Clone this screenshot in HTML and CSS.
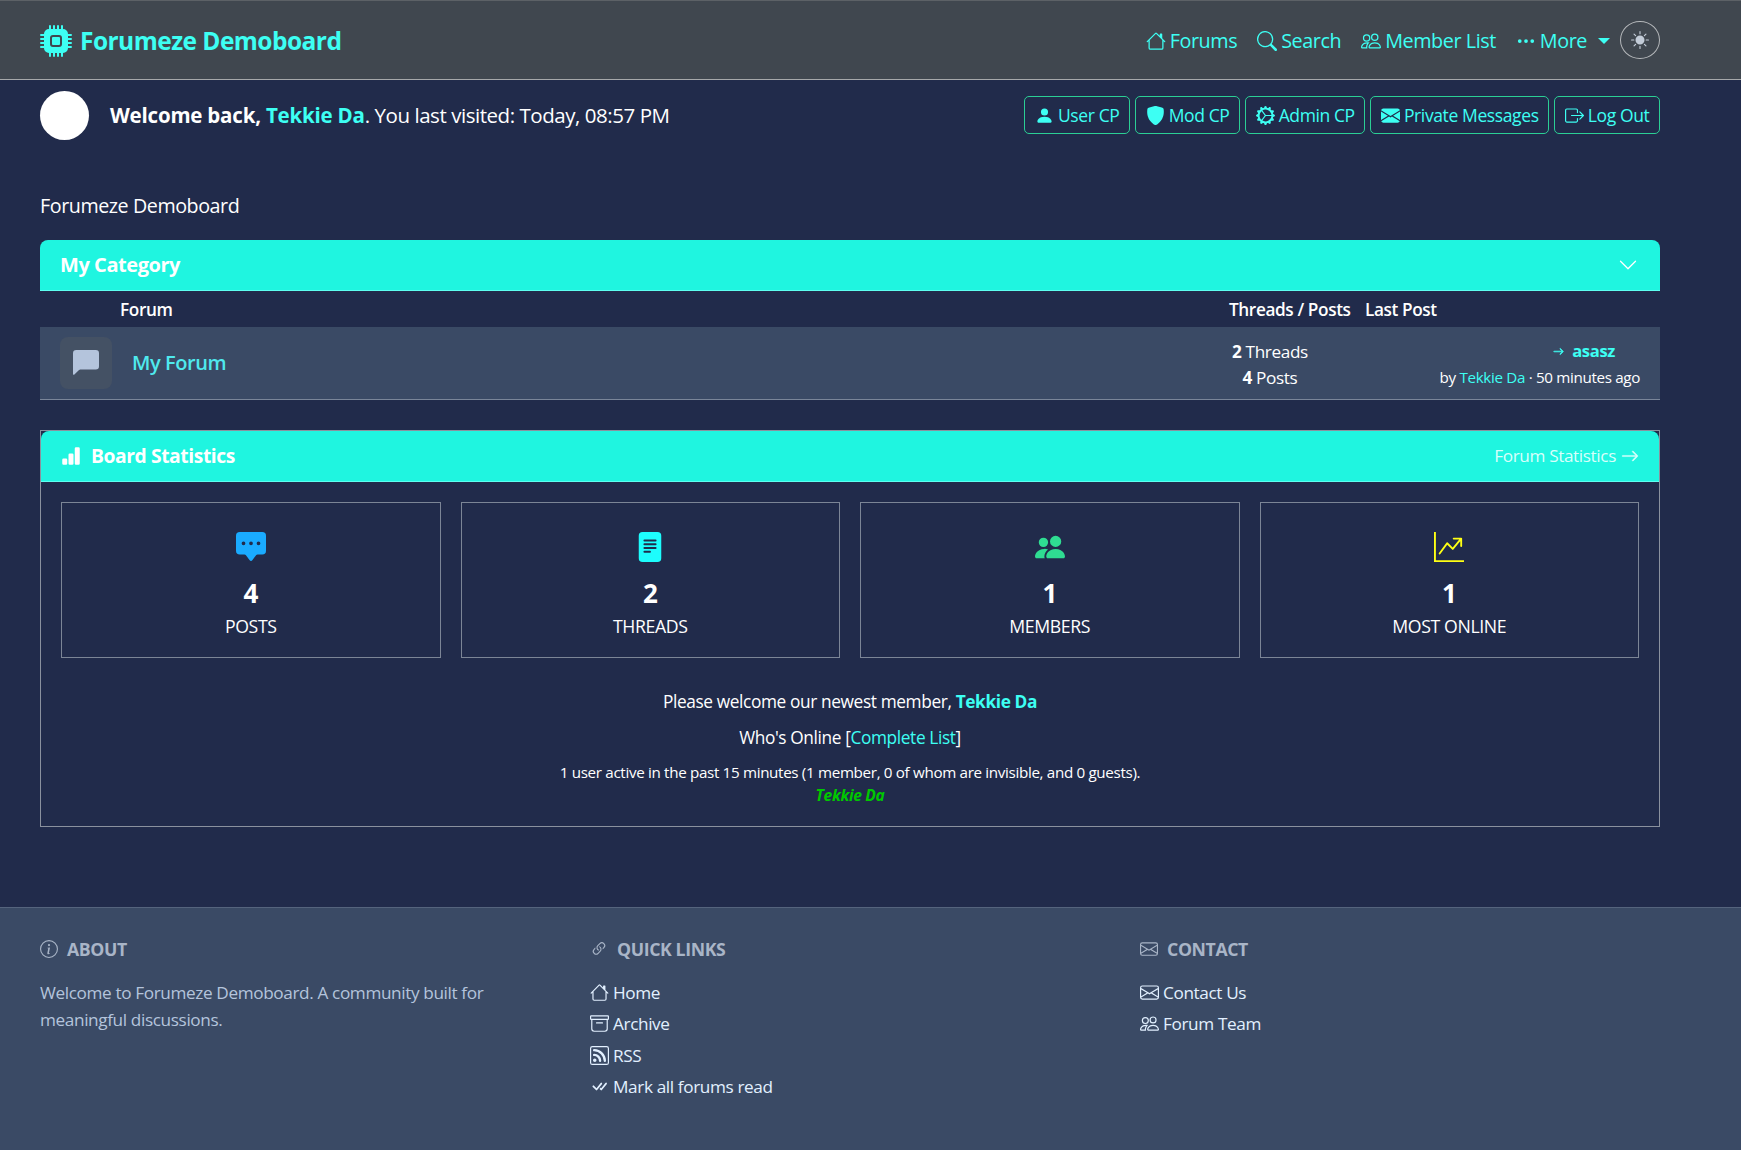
FILE: index.html
```html
<!DOCTYPE html>
<html lang="en">
<head>
<meta charset="utf-8">
<title>Forumeze Demoboard</title>
<link rel="stylesheet" href="styles.css">
</head>
<body>
<svg class="defs" aria-hidden="true">
<symbol id="i-house" viewBox="0 0 16 16"><path d="M8.707 1.5a1 1 0 0 0-1.414 0L.646 8.146a.5.5 0 0 0 .708.708L2 8.207V13.5A1.5 1.5 0 0 0 3.5 15h9a1.5 1.5 0 0 0 1.5-1.5V8.207l.646.647a.5.5 0 0 0 .708-.708L13 5.793V2.5a.5.5 0 0 0-.5-.5h-1a.5.5 0 0 0-.5.5v1.293zM13 7.207V13.5a.5.5 0 0 1-.5.5h-9a.5.5 0 0 1-.5-.5V7.207l5-5z"/></symbol>
<symbol id="i-people" viewBox="0 0 16 16"><path d="M15 14s1 0 1-1-1-4-5-4-5 3-5 4 1 1 1 1zm-7.978-1L7 12.996c.001-.264.167-1.03.76-1.72C8.312 10.629 9.282 10 11 10c1.717 0 2.687.63 3.24 1.276.593.69.758 1.457.76 1.72l-.008.002-.014.002zM11 7a2 2 0 1 0 0-4 2 2 0 0 0 0 4m3-2a3 3 0 1 1-6 0 3 3 0 0 1 6 0M6.936 9.28a6 6 0 0 0-1.23-.247A7 7 0 0 0 5 9c-4 0-5 3-5 4q0 1 1 1h4.216A2.24 2.24 0 0 1 5 13c0-1.01.377-2.042 1.09-2.904.243-.294.526-.569.846-.816M4.92 10A5.5 5.5 0 0 0 4 13H1c0-.26.164-1.03.76-1.724.545-.636 1.492-1.256 3.16-1.275ZM1.5 5.5a3 3 0 1 1 6 0 3 3 0 0 1-6 0m3-2a2 2 0 1 0 0 4 2 2 0 0 0 0-4"/></symbol>
<symbol id="i-envelope" viewBox="0 0 16 16"><path d="M0 4a2 2 0 0 1 2-2h12a2 2 0 0 1 2 2v8a2 2 0 0 1-2 2H2a2 2 0 0 1-2-2zm2-1a1 1 0 0 0-1 1v.217l7 4.2 7-4.2V4a1 1 0 0 0-1-1zm13 2.383-4.708 2.825L15 11.105zm-.034 6.876-5.64-3.471L8 9.583l-1.326-.795-5.64 3.47A1 1 0 0 0 2 13h12a1 1 0 0 0 .966-.741M1 11.105l4.708-2.897L1 5.383z"/></symbol>
<symbol id="i-arrow" viewBox="0 0 16 16"><path d="M1 8a.5.5 0 0 1 .5-.5h11.793l-3.147-3.146a.5.5 0 0 1 .708-.708l4 4a.5.5 0 0 1 0 .708l-4 4a.5.5 0 0 1-.708-.708L13.293 8.5H1.5A.5.5 0 0 1 1 8"/></symbol>
</svg>

<header class="topbar">
  <a class="brand" href="#">
    <svg class="brand-icon" viewBox="0 0 16 16"><path d="M6.5 6a.5.5 0 0 0-.5.5v3a.5.5 0 0 0 .5.5h3a.5.5 0 0 0 .5-.5v-3a.5.5 0 0 0-.5-.5z"/><path d="M5.5.5a.5.5 0 0 0-1 0V2A2.5 2.5 0 0 0 2 4.5H.5a.5.5 0 0 0 0 1H2v1H.5a.5.5 0 0 0 0 1H2v1H.5a.5.5 0 0 0 0 1H2v1H.5a.5.5 0 0 0 0 1H2A2.5 2.5 0 0 0 4.5 14v1.5a.5.5 0 0 0 1 0V14h1v1.5a.5.5 0 0 0 1 0V14h1v1.5a.5.5 0 0 0 1 0V14h1v1.5a.5.5 0 0 0 1 0V14a2.5 2.5 0 0 0 2.5-2.5h1.5a.5.5 0 0 0 0-1H14v-1h1.5a.5.5 0 0 0 0-1H14v-1h1.5a.5.5 0 0 0 0-1H14v-1h1.5a.5.5 0 0 0 0-1H14A2.5 2.5 0 0 0 11.5 2V.5a.5.5 0 0 0-1 0V2h-1V.5a.5.5 0 0 0-1 0V2h-1V.5a.5.5 0 0 0-1 0V2h-1zm1 4.5h3A1.5 1.5 0 0 1 11 6.5v3A1.5 1.5 0 0 1 9.5 11h-3A1.5 1.5 0 0 1 5 9.5v-3A1.5 1.5 0 0 1 6.5 5"/></svg>
    <span>Forumeze Demoboard</span>
  </a>
  <nav class="mainnav">
    <a href="#"><svg class="ic ic-nav" viewBox="0 0 16 16"><use href="#i-house"/></svg>Forums</a>
    <a href="#"><svg class="ic ic-nav" viewBox="0 0 16 16"><path d="M11.742 10.344a6.5 6.5 0 1 0-1.397 1.398h-.001q.044.06.098.115l3.85 3.85a1 1 0 0 0 1.415-1.414l-3.85-3.85a1 1 0 0 0-.115-.1zM12 6.5a5.5 5.5 0 1 1-11 0 5.5 5.5 0 0 1 11 0"/></svg>Search</a>
    <a href="#"><svg class="ic ic-nav" viewBox="0 0 16 16"><use href="#i-people"/></svg>Member List</a>
    <a href="#"><svg class="ic ic-nav" viewBox="0 0 16 16"><path d="M3 9.5a1.5 1.5 0 1 1 0-3 1.5 1.5 0 0 1 0 3m5 0a1.5 1.5 0 1 1 0-3 1.5 1.5 0 0 1 0 3m5 0a1.5 1.5 0 1 1 0-3 1.5 1.5 0 0 1 0 3"/></svg>More<span class="caret"></span></a>
    <button class="theme" type="button" aria-label="Theme"><svg class="ic-sun" viewBox="0 0 16 16"><path d="M8 12a4 4 0 1 0 0-8 4 4 0 0 0 0 8M8 0a.5.5 0 0 1 .5.5v2a.5.5 0 0 1-1 0v-2A.5.5 0 0 1 8 0m0 13a.5.5 0 0 1 .5.5v2a.5.5 0 0 1-1 0v-2A.5.5 0 0 1 8 13m8-5a.5.5 0 0 1-.5.5h-2a.5.5 0 0 1 0-1h2a.5.5 0 0 1 .5.5M3 8a.5.5 0 0 1-.5.5h-2a.5.5 0 0 1 0-1h2A.5.5 0 0 1 3 8m10.657-5.657a.5.5 0 0 1 0 .707l-1.414 1.415a.5.5 0 1 1-.707-.708l1.414-1.414a.5.5 0 0 1 .707 0m-9.193 9.193a.5.5 0 0 1 0 .707L3.05 13.657a.5.5 0 0 1-.707-.707l1.414-1.414a.5.5 0 0 1 .707 0m9.193 2.121a.5.5 0 0 1-.707 0l-1.414-1.414a.5.5 0 0 1 .707-.707l1.414 1.414a.5.5 0 0 1 0 .707M4.464 4.465a.5.5 0 0 1-.707 0L2.343 3.05a.5.5 0 1 1 .707-.707l1.414 1.414a.5.5 0 0 1 0 .708"/></svg></button>
  </nav>
</header>

<main class="page">
  <section class="welcome">
    <div class="avatar"></div>
    <p class="welcome-text"><strong>Welcome back, <a href="#">Tekkie Da</a></strong>. You last visited: Today, 08:57 PM</p>
    <div class="actions">
      <a class="btn" href="#"><svg class="ic" viewBox="0 0 16 16"><path d="M3 14s-1 0-1-1 1-4 6-4 6 3 6 4-1 1-1 1zm5-6a3 3 0 1 0 0-6 3 3 0 0 0 0 6"/></svg>User CP</a>
      <a class="btn" href="#"><svg class="ic" viewBox="0 0 16 16"><path d="M5.072.56C6.157.265 7.31 0 8 0s1.843.265 2.928.56c1.11.3 2.229.655 2.887.87a1.54 1.54 0 0 1 1.044 1.262c.596 4.477-.787 7.795-2.465 9.99a11.8 11.8 0 0 1-2.517 2.453 7 7 0 0 1-1.048.625c-.28.132-.581.24-.829.24s-.548-.108-.829-.24a7 7 0 0 1-1.048-.625 11.8 11.8 0 0 1-2.517-2.453C1.928 10.487.545 7.169 1.141 2.692A1.54 1.54 0 0 1 2.185 1.43 63 63 0 0 1 5.072.56"/></svg>Mod CP</a>
      <a class="btn" href="#"><svg class="ic" viewBox="0 0 16 16"><path d="M7.068.727c.243-.97 1.62-.97 1.864 0l.071.286a.96.96 0 0 0 1.622.434l.205-.211c.695-.719 1.888-.03 1.613.931l-.08.284a.96.96 0 0 0 1.187 1.187l.283-.081c.96-.275 1.65.918.931 1.613l-.211.205a.96.96 0 0 0 .434 1.622l.286.071c.97.243.97 1.62 0 1.864l-.286.071a.96.96 0 0 0-.434 1.622l.211.205c.719.695.03 1.888-.931 1.613l-.284-.08a.96.96 0 0 0-1.187 1.187l.081.283c.275.96-.918 1.65-1.613.931l-.205-.211a.96.96 0 0 0-1.622.434l-.071.286c-.243.97-1.62.97-1.864 0l-.071-.286a.96.96 0 0 0-1.622-.434l-.205.211c-.695.719-1.888.03-1.613-.931l.08-.284a.96.96 0 0 0-1.186-1.187l-.284.081c-.96.275-1.65-.918-.931-1.613l.211-.205a.96.96 0 0 0-.434-1.622l-.286-.071c-.97-.243-.97-1.62 0-1.864l.286-.071a.96.96 0 0 0 .434-1.622l-.211-.205c-.719-.695-.03-1.888.931-1.613l.284.08a.96.96 0 0 0 1.187-1.186l-.081-.284c-.275-.96.918-1.65 1.613-.931l.205.211a.96.96 0 0 0 1.622-.434zM12.973 8.5H8.25l-2.834 3.779A4.998 4.998 0 0 0 12.973 8.5m0-1a4.998 4.998 0 0 0-7.557-3.779l2.834 3.78zM5.048 3.967l-.087.065zm-.431.355A4.98 4.98 0 0 0 3.002 8c0 1.455.622 2.765 1.615 3.678L7.375 8 4.617 4.322Z"/></svg>Admin CP</a>
      <a class="btn" href="#"><svg class="ic" viewBox="0 0 16 16"><path d="M.05 3.555A2 2 0 0 1 2 2h12a2 2 0 0 1 1.95 1.555L8 8.414zM0 4.697v7.104l5.803-3.558zM6.761 8.83l-6.57 4.027A2 2 0 0 0 2 14h12a2 2 0 0 0 1.808-1.144l-6.57-4.027L8 9.586zm3.436-.586L16 11.801V4.697z"/></svg>Private Messages</a>
      <a class="btn" href="#"><svg class="ic" viewBox="0 0 16 16"><path fill-rule="evenodd" d="M10 12.5a.5.5 0 0 1-.5.5h-8a.5.5 0 0 1-.5-.5v-9a.5.5 0 0 1 .5-.5h8a.5.5 0 0 1 .5.5v2a.5.5 0 0 0 1 0v-2A1.5 1.5 0 0 0 9.5 2h-8A1.5 1.5 0 0 0 0 3.5v9A1.5 1.5 0 0 0 1.5 14h8a1.5 1.5 0 0 0 1.5-1.5v-2a.5.5 0 0 0-1 0z"/><path fill-rule="evenodd" d="M15.854 8.354a.5.5 0 0 0 0-.708l-3-3a.5.5 0 0 0-.708.708L14.293 7.5H5.5a.5.5 0 0 0 0 1h8.793l-2.147 2.146a.5.5 0 0 0 .708.708z"/></svg>Log Out</a>
    </div>
  </section>

  <div class="crumb">Forumeze Demoboard</div>

  <section class="category">
    <div class="cat-head">
      <span>My Category</span>
      <svg class="chev" viewBox="0 0 16 16"><path d="M1.646 4.646a.5.5 0 0 1 .708 0L8 10.293l5.646-5.647a.5.5 0 0 1 .708.708l-6 6a.5.5 0 0 1-.708 0l-6-6a.5.5 0 0 1 0-.708"/></svg>
    </div>
    <div class="cat-cols">
      <span class="col-forum">Forum</span>
      <span class="col-counts">Threads / Posts</span>
      <span class="col-last">Last Post</span>
    </div>
    <div class="forum-row">
      <div class="forum-icon"><svg viewBox="0 0 16 16"><path d="M2 0a2 2 0 0 0-2 2v12.793a.5.5 0 0 0 .854.353l2.853-2.853A1 1 0 0 1 4.414 12H14a2 2 0 0 0 2-2V2a2 2 0 0 0-2-2z"/></svg></div>
      <a class="forum-name" href="#">My Forum</a>
      <div class="forum-counts">
        <div><b>2</b> Threads</div>
        <div><b>4</b> Posts</div>
      </div>
      <div class="forum-last">
        <div class="last-title"><svg class="ic-small" viewBox="0 0 16 16"><use href="#i-arrow"/></svg><a href="#">asasz</a></div>
        <div class="last-by">by <a href="#">Tekkie Da</a> · 50 minutes ago</div>
      </div>
    </div>
  </section>

  <section class="stats">
    <div class="stats-head">
      <span class="stats-title"><svg viewBox="0 0 16 16"><path d="M1 11a1 1 0 0 1 1-1h2a1 1 0 0 1 1 1v3a1 1 0 0 1-1 1H2a1 1 0 0 1-1-1zm5-4a1 1 0 0 1 1-1h2a1 1 0 0 1 1 1v7a1 1 0 0 1-1 1H7a1 1 0 0 1-1-1zm5-5a1 1 0 0 1 1-1h2a1 1 0 0 1 1 1v12a1 1 0 0 1-1 1h-2a1 1 0 0 1-1-1z"/></svg>Board Statistics</span>
      <a class="stats-link" href="#">Forum Statistics<svg viewBox="0 0 16 16"><use href="#i-arrow"/></svg></a>
    </div>
    <div class="stat-grid">
      <div class="stat">
        <svg class="stat-icon c-blue" viewBox="0 0 16 16"><path d="M0 2a2 2 0 0 1 2-2h12a2 2 0 0 1 2 2v8a2 2 0 0 1-2 2h-2.5a1 1 0 0 0-.8.4l-1.9 2.533a1 1 0 0 1-1.6 0L5.3 12.4a1 1 0 0 0-.8-.4H2a2 2 0 0 1-2-2zm5 4a1 1 0 1 0-2 0 1 1 0 0 0 2 0m4 0a1 1 0 1 0-2 0 1 1 0 0 0 2 0m3 1a1 1 0 1 0 0-2 1 1 0 0 0 0 2"/></svg>
        <div class="stat-num">4</div><div class="stat-label">Posts</div>
      </div>
      <div class="stat">
        <svg class="stat-icon c-cyan" viewBox="0 0 16 16"><path d="M12 0H4a2 2 0 0 0-2 2v12a2 2 0 0 0 2 2h8a2 2 0 0 0 2-2V2a2 2 0 0 0-2-2M5 4h6a.5.5 0 0 1 0 1H5a.5.5 0 0 1 0-1m-.5 2.5A.5.5 0 0 1 5 6h6a.5.5 0 0 1 0 1H5a.5.5 0 0 1-.5-.5M5 8h6a.5.5 0 0 1 0 1H5a.5.5 0 0 1 0-1m0 2h3a.5.5 0 0 1 0 1H5a.5.5 0 0 1 0-1"/></svg>
        <div class="stat-num">2</div><div class="stat-label">Threads</div>
      </div>
      <div class="stat">
        <svg class="stat-icon c-green" viewBox="0 0 16 16"><path d="M7 14s-1 0-1-1 1-4 5-4 5 3 5 4-1 1-1 1zm4-6a3 3 0 1 0 0-6 3 3 0 0 0 0 6m-5.784 6A2.24 2.24 0 0 1 5 13c0-1.355.68-2.75 1.936-3.72A6.3 6.3 0 0 0 5 9c-4 0-5 3-5 4s1 1 1 1zM4.5 8a2.5 2.5 0 1 0 0-5 2.5 2.5 0 0 0 0 5"/></svg>
        <div class="stat-num">1</div><div class="stat-label">Members</div>
      </div>
      <div class="stat">
        <svg class="stat-icon c-yellow" viewBox="0 0 16 16"><path fill-rule="evenodd" d="M0 0h1v15h15v1H0zm10 3.5a.5.5 0 0 1 .5-.5h4a.5.5 0 0 1 .5.5v4a.5.5 0 0 1-1 0V4.9l-3.613 4.417a.5.5 0 0 1-.74.037L7.06 6.767l-3.656 5.027a.5.5 0 0 1-.808-.588l4-5.5a.5.5 0 0 1 .758-.06l2.609 2.61L13.445 4H10.5a.5.5 0 0 1-.5-.5"/></svg>
        <div class="stat-num">1</div><div class="stat-label">Most Online</div>
      </div>
    </div>
    <div class="online">
      <p class="online-line">Please welcome our newest member, <a class="strong" href="#">Tekkie Da</a></p>
      <p class="online-line">Who's Online [<a href="#">Complete List</a>]</p>
      <p class="online-small">1 user active in the past 15 minutes (1 member, 0 of whom are invisible, and 0 guests).</p>
      <p class="online-user"><a href="#">Tekkie Da</a></p>
    </div>
  </section>
</main>

<footer class="footer">
  <div class="foot-col">
    <h4 class="foot-head"><svg viewBox="0 0 16 16"><path d="M8 15A7 7 0 1 1 8 1a7 7 0 0 1 0 14m0 1A8 8 0 1 0 8 0a8 8 0 0 0 0 16"/><path d="m8.93 6.588-2.29.287-.082.38.45.083c.294.07.352.176.288.469l-.738 3.468c-.194.897.105 1.319.808 1.319.545 0 1.178-.252 1.465-.598l.088-.416c-.2.176-.492.246-.686.246-.275 0-.375-.193-.304-.533zM9 4.5a1 1 0 1 1-2 0 1 1 0 0 1 2 0"/></svg>About</h4>
    <p class="foot-text">Welcome to Forumeze Demoboard. A community built for meaningful discussions.</p>
  </div>
  <div class="foot-col">
    <h4 class="foot-head"><svg viewBox="0 0 16 16"><path d="M4.715 6.542 3.343 7.914a3 3 0 1 0 4.243 4.243l1.828-1.829A3 3 0 0 0 8.586 5.5L8 6.086a1 1 0 0 0-.154.199 2 2 0 0 1 .861 3.337L6.88 11.45a2 2 0 1 1-2.83-2.83l.793-.792a4 4 0 0 1-.128-1.287z"/><path d="M6.586 4.672A3 3 0 0 0 7.414 9.5l.775-.776a2 2 0 0 1-.896-3.346L9.12 3.55a2 2 0 1 1 2.83 2.83l-.793.792c.112.42.155.855.128 1.287l1.372-1.372a3 3 0 1 0-4.243-4.243z"/></svg>Quick Links</h4>
    <ul class="foot-links">
      <li><a href="#"><svg class="ic" viewBox="0 0 16 16"><use href="#i-house"/></svg>Home</a></li>
      <li><a href="#"><svg class="ic" viewBox="0 0 16 16"><path d="M0 2a1 1 0 0 1 1-1h14a1 1 0 0 1 1 1v2a1 1 0 0 1-1 1v7.5a2.5 2.5 0 0 1-2.5 2.5h-9A2.5 2.5 0 0 1 1 12.5V5a1 1 0 0 1-1-1zm2 3v7.5A1.5 1.5 0 0 0 3.5 14h9a1.5 1.5 0 0 0 1.5-1.5V5zm13-3H1v2h14zM5 7.5a.5.5 0 0 1 .5-.5h5a.5.5 0 0 1 0 1h-5a.5.5 0 0 1-.5-.5"/></svg>Archive</a></li>
      <li><a href="#"><svg class="ic" viewBox="0 0 16 16"><path d="M14 1a1 1 0 0 1 1 1v12a1 1 0 0 1-1 1H2a1 1 0 0 1-1-1V2a1 1 0 0 1 1-1zM2 0a2 2 0 0 0-2 2v12a2 2 0 0 0 2 2h12a2 2 0 0 0 2-2V2a2 2 0 0 0-2-2z"/><path d="M5.5 12a1.5 1.5 0 1 1-3 0 1.5 1.5 0 0 1 3 0m-3-8.5a1 1 0 0 1 1-1c5.523 0 10 4.477 10 10a1 1 0 1 1-2 0 8 8 0 0 0-8-8 1 1 0 0 1-1-1m0 4a1 1 0 0 1 1-1 6 6 0 0 1 6 6 1 1 0 1 1-2 0 4 4 0 0 0-4-4 1 1 0 0 1-1-1"/></svg>RSS</a></li>
      <li><a href="#"><svg class="ic" viewBox="0 0 16 16"><path d="M8.97 4.97a.75.75 0 0 1 1.07 1.05l-3.99 4.99a.75.75 0 0 1-1.08.02L2.324 8.384a.75.75 0 1 1 1.06-1.06l2.094 2.093L8.95 4.992zm-.92 5.14.92.92a.75.75 0 0 0 1.079-.02l3.992-4.99a.75.75 0 1 0-1.091-1.028L9.477 9.417l-.485-.486z"/></svg>Mark all forums read</a></li>
    </ul>
  </div>
  <div class="foot-col">
    <h4 class="foot-head"><svg viewBox="0 0 16 16"><use href="#i-envelope"/></svg>Contact</h4>
    <ul class="foot-links">
      <li><a href="#"><svg class="ic" viewBox="0 0 16 16"><use href="#i-envelope"/></svg>Contact Us</a></li>
      <li><a href="#"><svg class="ic" viewBox="0 0 16 16"><use href="#i-people"/></svg>Forum Team</a></li>
    </ul>
  </div>
</footer>
</body>
</html>
```

FILE: styles.css
```css
* { box-sizing: border-box; letter-spacing: -0.022em; }
html, body { margin: 0; padding: 0; }
body {
  background: #212b4b;
  color: #fff;
  font-family: "Open Sans", "Noto Sans", sans-serif;
  font-size: 17px;
  line-height: 1.5;
}
a { color: #3dfff3; text-decoration: none; }
p { margin: 0; }
svg { fill: currentColor; }
.defs { position: absolute; width: 0; height: 0; overflow: hidden; }
.ic { width: 19px; height: 19px; flex: none; }

.topbar {
  height: 80px;
  padding: 2px 81px 0 40px;
  display: flex;
  align-items: center;
  justify-content: space-between;
  background: #40474f;
  border-top: 1px solid #5c6166;
  border-bottom: 1px solid #a6a8aa;
}
.brand { display: flex; align-items: center; gap: 8px; font-size: 24.5px; font-weight: 700; }
.brand-icon { width: 32px; height: 32px; }
.mainnav { display: flex; align-items: center; gap: 20px; font-size: 19.8px; }
.mainnav a { display: flex; align-items: center; gap: 4px; }
.ic-nav { width: 20px; height: 20px; }
.caret { width: 0; height: 0; margin-left: 7px; border-left: 6px solid transparent; border-right: 6px solid transparent; border-top: 6px solid currentColor; }
.theme { width: 40px; height: 38px; margin-left: -10px; margin-top: -2px; padding: 0; display: flex; align-items: center; justify-content: center; background: transparent; border: 1px solid #b5b8bb; border-radius: 50%; color: #c3ccd8; }
.ic-sun { width: 18px; height: 18px; }

.page { padding: 8px 81px 0 40px; height: 827px; }
.welcome { display: flex; align-items: center; height: 54px; }
.avatar { width: 49px; height: 49px; border-radius: 50%; background: #fff; margin-right: 21px; }
.welcome-text { font-size: 20.5px; flex: 1; }
.welcome-text strong { letter-spacing: -0.01em; }
.welcome-text a { color: #3dfff3; letter-spacing: -0.01em; }
.actions { display: flex; gap: 5px; }
.btn { height: 38px; display: flex; align-items: center; gap: 4px; padding: 0 9.6px; border: 1px solid #2bcf95; border-radius: 5px; font-size: 17.5px; }

.crumb { font-size: 19.7px; margin-top: 50px; height: 28px; line-height: 28px; }

.category { margin-top: 20px; }
.cat-head {
  height: 51px;
  padding: 0 20px;
  display: flex;
  align-items: center;
  justify-content: space-between;
  background: #1ff5e0;
  border-bottom: 1px solid #5dfff0;
  border-radius: 8px 8px 0 0;
  font-size: 20px;
  font-weight: 700;
}
.chev { width: 20px; height: 20px; margin-right: 2px; }
.cat-cols { height: 36px; padding-top: 2px; display: flex; align-items: center; font-size: 17.2px; font-weight: 600; }
.col-forum { margin-left: 80px; width: 1109px; }
.col-counts { width: 136px; }
.forum-row { height: 73px; display: flex; align-items: center; padding: 0 20px; background: #3a4a65; border-bottom: 1px solid #7a8699; }
.forum-icon { width: 52px; height: 52px; display: flex; align-items: center; justify-content: center; background: #445164; border-radius: 8px; color: #b4c4dc; }
.forum-icon svg { width: 26px; height: 26px; }
.forum-name { margin-left: 20px; width: 1088px; font-size: 20px; font-weight: 600; color: #4fe9ee; }
.forum-counts { width: 100px; margin-top: 3px; text-align: center; font-size: 17.2px; line-height: 26px; }
.forum-last { flex: 1; margin-top: 3px; text-align: right; font-size: 15.2px; }
.last-title { padding-right: 25px; display: flex; justify-content: flex-end; align-items: center; gap: 8px; font-weight: 700; font-size: 16.6px; color: #3dfff3; line-height: 26px; }
.ic-small { width: 11px; height: 11px; stroke: currentColor; stroke-width: 1; }
.last-by { line-height: 27px; }

.stats { margin-top: 30px; height: 397px; border: 1px solid #8a919e; }
.stats-head { height: 51px; padding: 0 20px; display: flex; align-items: center; justify-content: space-between; background: #1ff5e0; border-bottom: 1px solid #5dfff0; border-radius: 8px 8px 0 0; }
.stats-title { display: flex; align-items: center; gap: 10px; font-size: 19.3px; font-weight: 700; }
.stats-title svg { width: 20px; height: 20px; }
.stats-link { display: flex; align-items: center; gap: 5px; color: #d8fffb; font-size: 17.2px; }
.stats-link svg { width: 18px; height: 18px; stroke: currentColor; stroke-width: .4; }
.stat-grid { display: grid; grid-template-columns: repeat(4, 1fr); gap: 20px; padding: 20px 20px 0; }
.stat { height: 156px; border: 1px solid #7c8596; text-align: center; padding-top: 29px; }
.stat-icon { display: block; width: 30px; height: 30px; margin: 0 auto; }
.c-blue { color: #1aabff; }
.c-cyan { color: #1dfdfd; }
.c-green { color: #2fdc92; }
.c-yellow { color: #ffff14; }
.stat-num { font-size: 26px; font-weight: 700; line-height: 36px; margin-top: 13px; }
.stat-label { font-size: 17.7px; text-transform: uppercase; line-height: 30px; }
.online { text-align: center; padding-top: 31px; }
.online-line { font-size: 17.3px; line-height: 26px; margin-bottom: 10px; }
.online-line .strong { font-weight: 700; }
.online-small { font-size: 15.2px; line-height: 23px; }
.online-user { font-size: 15.6px; line-height: 22px; font-style: italic; font-weight: 700; }
.online-user a { color: #00c800; }

.footer { height: 243px; padding: 27px 51px 0 40px; display: grid; grid-template-columns: repeat(3, 1fr); background: #3a4a65; border-top: 1px solid #55647d; }
.foot-col { width: 500px; }
.foot-head { margin: 0 0 16px; display: flex; align-items: center; gap: 9px; font-size: 17.7px; font-weight: 700; text-transform: uppercase; color: #a9b5c7; line-height: 28px; }
.foot-head svg { width: 18px; height: 18px; color: #a9b5c7; }
.foot-text { font-size: 17.2px; line-height: 27px; color: #b4c4dc; max-width: 460px; }
.foot-links { list-style: none; margin: 0; padding: 0; }
.foot-links li { height: 31.3px; }
.foot-links a { display: flex; align-items: center; gap: 4px; color: #e2f0ff; font-size: 17.2px; line-height: 27px; }
```
